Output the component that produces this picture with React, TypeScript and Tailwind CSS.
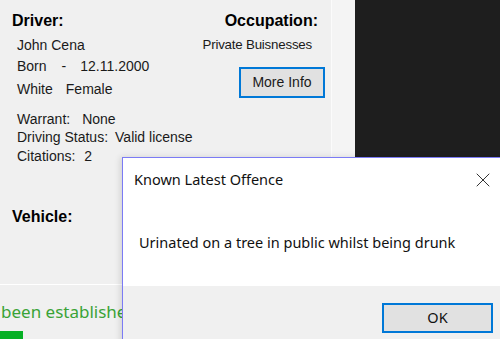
import { X } from "lucide-react";

function Row({ children, className = "", size = "text-[14px]" }: { children: React.ReactNode; className?: string; size?: string }) {
  return <div className={`h-5 leading-5 text-[#1a1a1a] whitespace-nowrap ${size} ${className}`}>{children}</div>;
}

export default function App() {
  return (
    <div className="relative w-[500px] h-[339px] overflow-hidden bg-[#f0f0f0] font-['Liberation_Sans',Arial,sans-serif]">
      {/* Main form */}
      <div className="flex h-[285px] border-b border-white">
        <div className="w-[332px] border-r border-[#fbfbfb] flex justify-between pt-[11px]">
          {/* Driver column */}
          <div className="pl-3">
            <div className="h-5 leading-5 text-[16px] font-bold text-black">Driver:</div>
            <div className="pl-[5px]">
              <Row className="mt-1">John Cena</Row>
              <Row className="mt-[1px]">
                Born<span className="ml-[15px]">-</span>
                <span className="ml-[14px]">12.11.2000</span>
              </Row>
              <Row className="mt-[3px]">
                White<span className="ml-[13px]">Female</span>
              </Row>
              <Row className="mt-[11px] h-[18px] leading-[18px]">
                Warrant:<span className="ml-[12px]">None</span>
              </Row>
              <Row className="h-[19px] leading-[19px]">
                Driving Status:<span className="ml-[7px]">Valid license</span>
              </Row>
              <Row className="h-[19px] leading-[19px]">
                Citations:<span className="ml-[9px]">2</span>
              </Row>
            </div>
            <div className="mt-[41px] h-5 leading-5 text-[16px] font-bold text-black">Vehicle:</div>
          </div>

          {/* Occupation column */}
          <div className="pr-[6px] flex flex-col items-end">
            <div className="mr-[7px] h-5 leading-5 text-[16px] font-bold text-black">Occupation:</div>
            <Row className="mt-1 mr-[13px]" size="text-[13.3px] tracking-[-0.2px]">Private Buisnesses</Row>
            <button className="mt-[12px] w-[86px] h-[31px] bg-[#e1e1e1] border-2 border-[#0078d7] text-[14px] text-[#1a1a1a]">
              More Info
            </button>
          </div>
        </div>
        <div className="w-[23px] bg-[#f4f4f4]" />
        <div className="flex-1 bg-[#1e1e1e]" />
      </div>

      {/* Status line */}
      <div className="pl-[1px] mt-[17px] h-[20px] leading-[20px] text-[17px] text-[#3aa336] font-['Noto_Sans',sans-serif] whitespace-nowrap">
        been established
      </div>
      <div className="mt-[9px] w-[23px] h-[8px] bg-[#06b025]" />

      {/* Message box */}
      <div className="absolute left-[122px] top-[157px] w-[400px] h-[200px] bg-white border border-[#7b7bf5] shadow-[-2px_0_6px_rgba(0,0,0,0.12)] flex flex-col font-['Noto_Sans',sans-serif]">
        <div className="h-[44px] flex items-center justify-between pl-[11px] pr-[26px]">
          <span className="text-[14.5px] text-[#111]">Known Latest Offence</span>
          <X size={24} strokeWidth={1} className="text-[#333]" />
        </div>
        <div className="h-[84px] flex items-center pl-[16px] pb-[3px]">
          <span className="text-[14.5px] text-[#111]">Urinated on a tree in public whilst being drunk</span>
        </div>
        <div className="flex-1 bg-[#f0f0f0] pt-[17px] pl-[259px]">
          <button className="w-[111px] h-[30px] bg-[#e1e1e1] border-2 border-[#0078d7] text-[14.5px] text-[#111]">
            OK
          </button>
        </div>
      </div>
    </div>
  );
}
